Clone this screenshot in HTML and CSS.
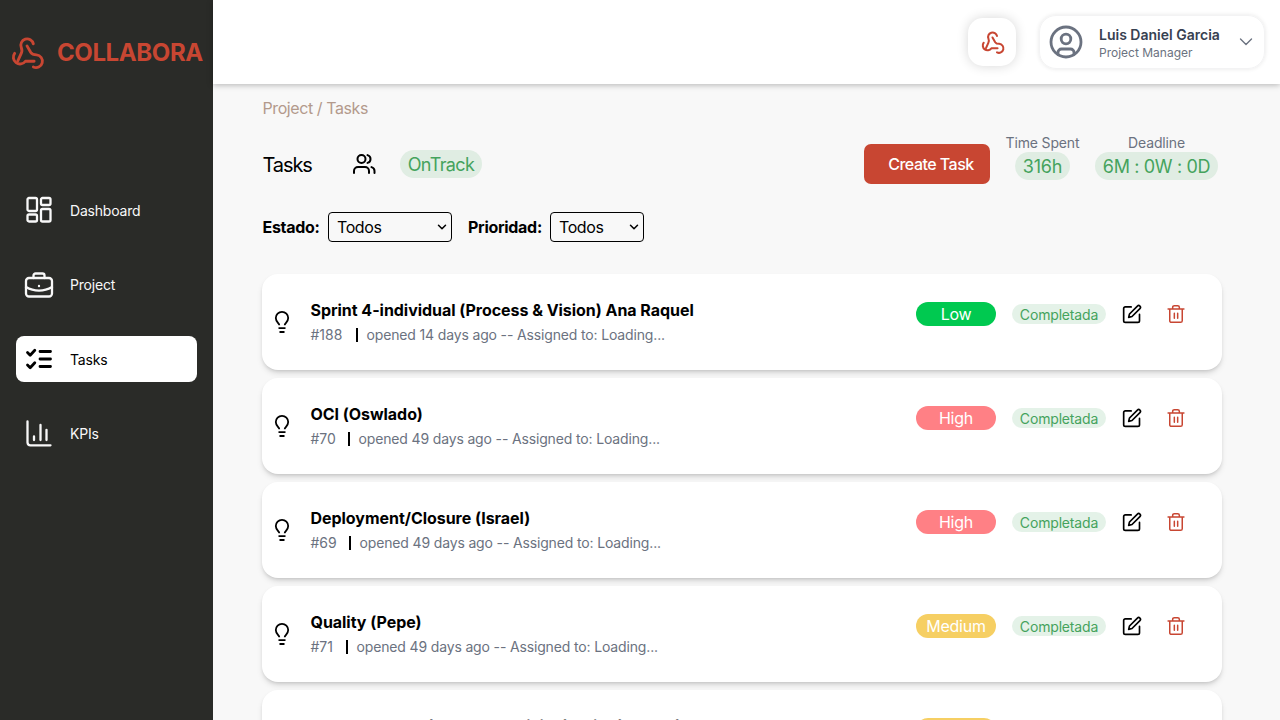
FILE: index.html
```html
<!DOCTYPE html>
<html lang="es">
<head>
<meta charset="utf-8">
<title>Collabora</title>
<link rel="stylesheet" href="styles.css">
</head>
<body>
<svg class="defs" aria-hidden="true">
  <symbol id="hook" viewBox="0 0 24 24"><path d="M4.200 12.200A4 4 0 1 0 11 17.200h5.500"/><path d="M16 20.800A4 4 0 1 0 18 13.200c-1.800 0-2.800-.2-3.600-1.500L12 7.500"/><path d="M16 6.200a4 4 0 1 0-7.600 2.400c.7 1.700.6 2.600-.2 4L6.200 17"/></symbol>
  <symbol id="bulb" viewBox="0 0 24 24"><path d="M9.3 15.2c0-2-3.5-3.2-3.5-7.1a6.2 6.2 0 0 1 12.4 0c0 3.9-3.500 5.100-3.500 7.100M8.500 18.100h7M9.500 22h5"/></symbol>
  <symbol id="edit" viewBox="0 0 24 24"><path d="M11 3.500H4a2 2 0 0 0-2 2v14.500a2 2 0 0 0 2 2h15a2 2 0 0 0 2-2v-7.500"/><path d="M18.500 2.500a2.121 2.121 0 0 1 3 3L12 15l-4 1 1-4z"/></symbol>
  <symbol id="trash" viewBox="0 0 24 24"><path d="M2.500 6h19M19.500 6v14a2 2 0 0 1-2 2h-11a2 2 0 0 1-2-2V6M8 6V4a2 2 0 0 1 2-2h4a2 2 0 0 1 2 2v2M10 11v6M14 11v6"/></symbol>
</svg>
<div class="app">
  <aside class="sidebar">
    <div class="brand"><svg class="brand-icon"><use href="#hook"/></svg><span class="brand-name">COLLABORA</span></div>
    <nav class="nav">
      <a class="nav-item"><svg viewBox="0 0 26 26"><rect x="1.500" y="1" width="9.500" height="13" rx="1.500"/><rect x="15" y="1" width="9.500" height="7" rx="1.500"/><rect x="1.500" y="17.500" width="9.500" height="7" rx="1.500"/><rect x="15" y="12" width="9.500" height="12.500" rx="1.500"/></svg><span>Dashboard</span></a>
      <a class="nav-item"><svg viewBox="0 0 26 26"><rect x="0" y="6" width="26" height="18.500" rx="3"/><path d="M7.500 6V3.500a2 2 0 0 1 2-2h7a2 2 0 0 1 2 2V6M0 15c8 4.800 18 4.800 26 0M13 14v.2"/></svg><span>Project</span></a>
      <a class="nav-item active"><svg viewBox="0 0 26 26"><path class="thick" d="m1.500 6.500 2.700 2.700 4.600-5M1.500 19l2.700 2.700 4.600-5M14 5.500h10.500M14 13h10.500M14 20.500h10.500"/></svg><span>Tasks</span></a>
      <a class="nav-item"><svg viewBox="0 0 26 26"><path d="M1.500.5v21A3 3 0 0 0 4.500 24.300H24.500M8 15.500v3.500M14.500 4v15M20.500 8.800V19"/></svg><span>KPIs</span></a>
    </nav>
  </aside>
  <div class="main">
    <header class="topbar">
      <div class="app-button"><svg><use href="#hook"/></svg></div>
      <div class="profile">
        <svg class="avatar" viewBox="0 0 34 34"><circle cx="17" cy="17" r="15"/><circle cx="17" cy="14" r="4.800"/><path d="M9 29v-1.500a3.500 3.500 0 0 1 3.500-3.500h9a3.500 3.500 0 0 1 3.500 3.500V29"/></svg>
        <div class="who"><span class="who-name">Luis Daniel Garcia</span><span class="who-role">Project Manager</span></div>
        <svg class="chevron" viewBox="0 0 14 14"><path d="m1.500 4 5.500 5.500L12.500 4"/></svg>
      </div>
    </header>
    <main class="content">
      <div class="crumbs">Project / Tasks</div>
      <div class="heading">
        <h1>Tasks</h1>
        <svg class="users" viewBox="0 0 24 24"><path d="M17 21v-2a4 4 0 0 0-4-4H6a4 4 0 0 0-4 4v2"/><circle cx="9.500" cy="7" r="4"/><path d="M22.500 21v-2a4 4 0 0 0-3-3.870M15.500 3.130a4 4 0 0 1 0 7.750"/></svg>
        <span class="pill track">OnTrack</span>
        <button class="create">Create Task</button>
        <div class="stat spent"><span class="label">Time Spent</span><span class="pill hours">316h</span></div>
        <div class="stat deadline"><span class="label">Deadline</span><span class="pill due">6M : 0W : 0D</span></div>
      </div>
      <div class="filters">
        <label class="f-state">Estado:</label>
        <div class="select wide"><span>Todos</span><svg viewBox="0 0 10 10"><path d="m1.500 3.200 3.500 3.600 3.500-3.600"/></svg></div>
        <label class="f-priority">Prioridad:</label>
        <div class="select"><span>Todos</span><svg viewBox="0 0 10 10"><path d="m1.500 3.200 3.500 3.600 3.500-3.600"/></svg></div>
      </div>
      <div class="list">
        <article class="card">
          <svg class="bulb"><use href="#bulb"/></svg>
          <div class="info"><h2>Sprint 4-individual (Process &amp; Vision) Ana Raquel</h2><p><span class="n1">#188</span><i></i><span class="meta">opened 14 days ago -- Assigned to: Loading...</span></p></div>
          <div class="side"><span class="priority low">Low</span><span class="status">Completada</span><svg class="edit"><use href="#edit"/></svg><svg class="trash"><use href="#trash"/></svg></div>
        </article>
        <article class="card">
          <svg class="bulb"><use href="#bulb"/></svg>
          <div class="info"><h2>OCI (Oswlado)</h2><p><span class="n2">#70</span><i></i><span class="meta">opened 49 days ago -- Assigned to: Loading...</span></p></div>
          <div class="side"><span class="priority high">High</span><span class="status">Completada</span><svg class="edit"><use href="#edit"/></svg><svg class="trash"><use href="#trash"/></svg></div>
        </article>
        <article class="card">
          <svg class="bulb"><use href="#bulb"/></svg>
          <div class="info"><h2>Deployment/Closure (Israel)</h2><p><span class="n3">#69</span><i></i><span class="meta">opened 49 days ago -- Assigned to: Loading...</span></p></div>
          <div class="side"><span class="priority high">High</span><span class="status">Completada</span><svg class="edit"><use href="#edit"/></svg><svg class="trash"><use href="#trash"/></svg></div>
        </article>
        <article class="card">
          <svg class="bulb"><use href="#bulb"/></svg>
          <div class="info"><h2>Quality (Pepe)</h2><p><span class="n4">#71</span><i></i><span class="meta">opened 49 days ago -- Assigned to: Loading...</span></p></div>
          <div class="side"><span class="priority medium">Medium</span><span class="status">Completada</span><svg class="edit"><use href="#edit"/></svg><svg class="trash"><use href="#trash"/></svg></div>
        </article>
        <article class="card">
          <svg class="bulb"><use href="#bulb"/></svg>
          <div class="info"><h2 class="last">Task modelled (Process &amp; Vision) build (Raquel)</h2></div>
          <div class="side"><span class="priority medium">Medium</span><span class="status">Completada</span><svg class="edit"><use href="#edit"/></svg><svg class="trash"><use href="#trash"/></svg></div>
        </article>
      </div>
    </main>
  </div>
</div>
</body>
</html>
```
FILE: styles.css
```css
* { box-sizing: border-box; }
body { margin: 0; font-family: Inter, "Liberation Sans", sans-serif; font-size: 16px; line-height: 24px; color: #000; background: #f8f8f8; overflow: hidden; }
svg { fill: none; stroke: currentColor; stroke-width: 2; stroke-linecap: round; stroke-linejoin: round; flex: none; overflow: visible; }
.defs { display: none; }
h1, h2, p { margin: 0; font-weight: 400; }
span, label, h1, h2, .crumbs { white-space: nowrap; }
.app { display: flex; height: 720px; overflow: hidden; }
.sidebar { width: 213px; flex: none; background: #2a2b28; color: #f8f8f8; }
.brand { display: flex; align-items: center; height: 104px; padding: 2px 0 0 8px; color: #c84632; }
.brand-icon { width: 38px; height: 38px; stroke-width: 1.8; }
.brand-name { margin-left: 11px; font-size: 24px; font-weight: 700; letter-spacing: -.4px; }
.nav { display: flex; flex-direction: column; gap: 28.5px; padding: 83px 16px 0; }
.nav-item { display: flex; align-items: center; height: 46px; padding-left: 10px; border-radius: 8px; font-size: 14px; letter-spacing: -.2px; }
.nav-item span { padding-top: 1px; }
.nav-item svg { width: 26px; height: 26px; margin-right: 18px; stroke-width: 2.3; }
.nav-item.active { background: #fff; color: #000; }
.thick { stroke-width: 2.8; }
.main { flex: 1; min-width: 0; }
.topbar { position: relative; display: flex; align-items: center; justify-content: flex-end; height: 84px; padding-right: 15px; background: #fff; box-shadow: 0 1px 6px rgba(0,0,0,.28); }
.app-button { display: flex; align-items: center; justify-content: center; width: 48px; height: 48px; margin-right: 23px; border-radius: 15px; color: #c84632; box-shadow: 0 0 12px rgba(0,0,0,.16); }
.app-button svg { width: 27px; height: 27px; stroke-width: 1.8; }
.profile { display: flex; align-items: center; width: 226px; height: 54px; border: 1px solid #f3f3f4; border-radius: 17px; padding-left: 8.5px; color: #6b7280; box-shadow: 0 0 4px rgba(0,0,0,.1); }
.avatar { width: 34px; height: 34px; stroke-width: 2.8; }
.who { display: flex; flex-direction: column; width: 141px; margin-left: 16.5px; padding-top: 2px; }
.who-name { font-size: 14px; line-height: 18px; font-weight: 600; color: #374151; letter-spacing: 0; }
.who-role { font-size: 12px; line-height: 17px; }
.chevron { width: 14px; height: 14px; margin-left: -1px; stroke-width: 1.4; }
.content { padding: 12px 58px 0 49px; }
.crumbs { margin-left: .5px; color: #b39a8c; letter-spacing: -.42px; }
.heading { display: flex; align-items: center; height: 56px; margin-top: 12px; padding-right: 4px; }
.heading h1 { width: 89.5px; margin: 10px 0 0 .5px; font-size: 20px; line-height: 28px; letter-spacing: -1.1px; }
.users { width: 24px; height: 24px; margin: 7px 24px 0 0; }
.pill { display: block; height: 28px; border-radius: 14px; background: #e0ede3; color: #45a35d; text-align: center; font-size: 18px; line-height: 29px; }
.track { width: 82px; margin-top: 8px; letter-spacing: -.6px; }
.create { width: 126px; height: 40px; margin: 8px 16px 0 auto; padding: 0 0 0 8px; border: 0; border-radius: 7px; background: #c84632; color: #fff; font: 500 16px/40px Inter, sans-serif; letter-spacing: -.52px; white-space: nowrap; }
.stat { display: flex; flex-direction: column; align-items: center; height: 56px; padding-top: 1px; }
.stat .label { flex: none; height: 20px; font-size: 14px; line-height: 20px; color: #6b7280; letter-spacing: -.15px; }
.stat .pill { flex: none; margin-top: -1px; }
.spent { width: 73px; margin-right: 16px; }
.hours { width: 55px; letter-spacing: -.2px; }
.deadline { width: 123px; }
.due { width: 123px; letter-spacing: -.35px; }
.filters { display: flex; align-items: center; height: 30px; margin: 24px 0 32px .5px; font-weight: 700; }
.filters label { letter-spacing: -.3px; }
.f-state { width: 65.5px; }
.f-priority { width: 82px; margin-left: 16px; }
.select { display: flex; align-items: center; justify-content: space-between; width: 94px; height: 30px; padding: 0 4px 0 8px; border: 1px solid #000; border-radius: 4px; font-weight: 400; letter-spacing: -.4px; }
.select svg { width: 10px; height: 10px; stroke-width: 1.5; }
.wide { width: 124px; }
.list { display: flex; flex-direction: column; gap: 8px; }
.card { display: flex; height: 96px; flex: none; padding-left: 8px; border-radius: 16px; background: #fff; box-shadow: 0 4px 6px -1px rgba(0,0,0,.13), 0 2px 4px -2px rgba(0,0,0,.18); }
.bulb { width: 24px; height: 24px; margin: 36px 16.5px 0 0; stroke-width: 1.8; stroke-linecap: butt; }
.info { padding-top: 24px; }
.info h2 { font-size: 16px; line-height: 24px; font-weight: 700; letter-spacing: -.04px; }
.info p { display: flex; align-items: center; height: 26px; font-size: 14px; color: #6b7280; }
.info i { width: 1.5px; height: 14px; margin-right: 9px; background: #000; }
.n1 { width: 45.5px; }
.n2 { width: 37.5px; }
.n3 { width: 38.5px; }
.n4 { width: 35.5px; }
.meta { letter-spacing: -.15px; }
.side { display: flex; align-items: center; height: 24px; margin: 28px 36px 0 auto; }
.priority { width: 80px; height: 24px; border-radius: 12px; color: #fff; text-align: center; letter-spacing: -.25px; }
.low { background: #00c950; }
.high { background: #ff8085; }
.medium { background: #f6cf63; }
.status { width: 94px; height: 20px; margin: 0 16px; border-radius: 10px; background: #e4f2e8; color: #45a35d; text-align: center; font-size: 14px; line-height: 21px; letter-spacing: -.17px; }
.edit { width: 20px; height: 20px; margin-right: 24px; }
.trash { width: 20px; height: 20px; stroke-width: 1.8; color: #c84632; }
```
